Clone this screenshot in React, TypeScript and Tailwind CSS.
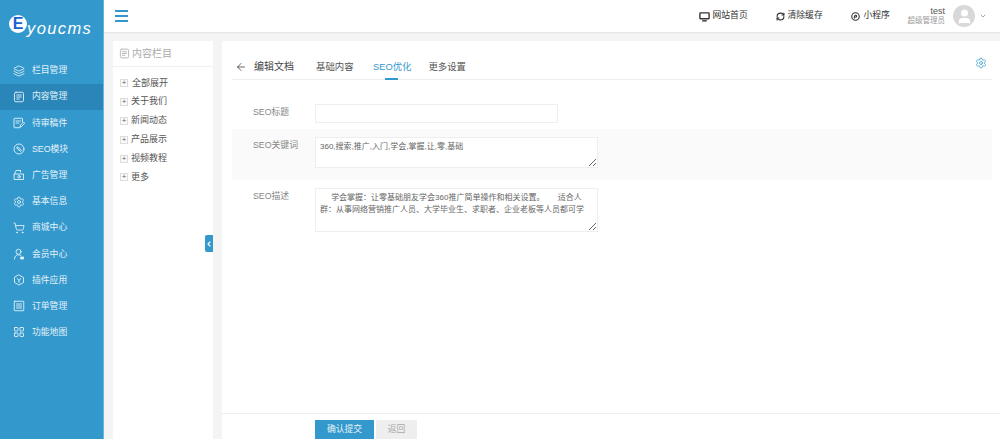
import type { ReactNode } from "react";
import { ArrowLeft, ChevronDown, ChevronLeft, Layers, LayoutGrid, RefreshCw, Settings, ShoppingCart, User } from "lucide-react";

function Svg({ size = 12, children }: { size?: number; children: ReactNode }) {
  return (
    <svg width={size} height={size} viewBox="0 0 24 24" fill="none" stroke="currentColor" strokeWidth="1.8" strokeLinecap="round" strokeLinejoin="round">
      {children}
    </svg>
  );
}

function DocIcon({ size = 12 }: { size?: number }) {
  return (
    <Svg size={size}>
      <rect x="3" y="2.5" width="18" height="19" rx="3" />
      <path d="M7.5 8h9M7.5 12h9M7.5 16h5" />
    </Svg>
  );
}

function ReviewIcon() {
  return (
    <Svg>
      <path d="M19 10V4a1.5 1.5 0 0 0-1.5-1.5h-14A1.5 1.5 0 0 0 2 4v16a1.5 1.5 0 0 0 1.5 1.5H13" />
      <path d="M6 8h9M6 12h6M14 20l1-4 6-6 2.5 2.5-6 6z" />
    </Svg>
  );
}

function SeoIcon() {
  return (
    <Svg>
      <circle cx="12" cy="12" r="10" />
      <path d="M8 9.5l2-2 7 7-1.6 2.3L8 9.5zM9.5 12l3 3" />
    </Svg>
  );
}

function AdIcon() {
  return (
    <Svg>
      <path d="M3 10h18v11H3zM3 10l3-7h9M15 3v3" />
      <circle cx="12" cy="15.5" r="2.5" />
    </Svg>
  );
}

function MemberIcon() {
  return (
    <Svg>
      <circle cx="11" cy="7.5" r="5" />
      <path d="M3 22c0-5 3-8.5 8-8.5 2 0 3.5.5 5 1.5" />
      <rect x="16" y="18" width="5" height="4" fill="currentColor" />
    </Svg>
  );
}

function PluginIcon() {
  return (
    <Svg>
      <path d="M12 2l9 5v10l-9 5-9-5V7z" />
      <path d="M8 9l4 3.5L16 9M12 12.5V17" />
    </Svg>
  );
}

function OrderIcon() {
  return (
    <Svg>
      <rect x="2.5" y="2.5" width="19" height="19" rx="1" />
      <path d="M7 8h10M7 12h10M7 16h10" />
    </Svg>
  );
}

function MonitorIcon() {
  return (
    <svg width="11" height="11" viewBox="0 0 24 24" fill="none" stroke="currentColor" strokeWidth="3">
      <rect x="2" y="4" width="20" height="13" rx="1" />
      <path d="M7 21.5h10" />
    </svg>
  );
}

function MiniIcon() {
  return (
    <svg width="9" height="9" viewBox="0 0 24 24" fill="none" stroke="currentColor" strokeWidth="3" strokeLinecap="round">
      <circle cx="12" cy="12" r="10" />
      <path d="M8.5 16l1.5-5.5a2.6 2.6 0 1 1 2.5 3.3" />
    </svg>
  );
}

const menu = [
  { label: "栏目管理", icon: <Layers size={12} strokeWidth={1.7} /> },
  { label: "内容管理", icon: <DocIcon />, active: true },
  { label: "待审稿件", icon: <ReviewIcon /> },
  { label: "SEO模块", icon: <SeoIcon /> },
  { label: "广告管理", icon: <AdIcon /> },
  { label: "基本信息", icon: <Settings size={12} strokeWidth={1.7} /> },
  { label: "商城中心", icon: <ShoppingCart size={12} strokeWidth={1.7} /> },
  { label: "会员中心", icon: <MemberIcon /> },
  { label: "插件应用", icon: <PluginIcon /> },
  { label: "订单管理", icon: <OrderIcon /> },
  { label: "功能地图", icon: <LayoutGrid size={12} strokeWidth={1.8} /> },
];

const tree = ["全部展开", "关于我们", "新闻动态", "产品展示", "视频教程", "更多"];

function Sidebar() {
  return (
    <aside className="w-[104px] shrink-0 bg-[#3398cc] border-r border-[#6db5dc] text-[#e4f2f9]">
      <div className="h-[57.5px] pl-[9px] pt-[15px] flex items-start">
        <div className="w-[18px] h-[18px] rounded-full bg-white flex items-center justify-center text-[#1a5fd0] text-[16px] font-bold leading-none">
          E
        </div>
        <span className="text-white text-[16.5px] italic leading-[26px] tracking-[1.4px]">youcms</span>
      </div>
      <nav>
        {menu.map((item) => (
          <div
            key={item.label}
            className={
              item.active
                ? "h-[26.2px] flex items-center pl-[13px] gap-[7px] bg-[#2a86b8]"
                : "h-[26.2px] flex items-center pl-[13px] gap-[7px]"
            }
          >
            {item.icon}
            <span className="text-[8.8px] leading-none">{item.label}</span>
          </div>
        ))}
      </nav>
    </aside>
  );
}

function Header() {
  return (
    <header className="h-[32px] shrink-0 bg-white shadow-[0_1px_2px_rgba(0,0,0,0.08)] flex items-center pl-[11px] pr-[13px] text-[#444] text-[8.8px] relative">
      <div className="flex flex-col gap-[3px]">
        <span className="block w-[13px] h-[2px] bg-[#3398cc]"></span>
        <span className="block w-[13px] h-[2px] bg-[#3398cc]"></span>
        <span className="block w-[13px] h-[2px] bg-[#3398cc]"></span>
      </div>
      <div className="ml-auto flex items-center">
        <span className="flex items-center gap-[3px] w-[77px] text-[#333]">
          <MonitorIcon />
          网站首页
        </span>
        <span className="flex items-center gap-[3px] w-[75px] text-[#333]">
          <RefreshCw size={9} strokeWidth={3} />
          清除缓存
        </span>
        <span className="flex items-center gap-[4px] w-[57px] text-[#333]">
          <MiniIcon />
          小程序
        </span>
        <div className="text-right leading-[10px] mr-[8px]">
          <div className="text-[#555] text-[9px]">test</div>
          <div className="text-[#999] text-[7.5px]">超级管理员</div>
        </div>
        <div className="w-[22px] h-[22px] rounded-full bg-[#d8d8d8] flex items-center justify-center">
          <User size={17} fill="#fff" className="text-white" />
        </div>
        <ChevronDown size={8} className="text-[#777] ml-[4px]" />
      </div>
    </header>
  );
}

function TreePanel() {
  return (
    <div className="w-[100px] shrink-0 bg-white relative">
      <div className="h-[26px] border-b border-[#f0f0f0] flex items-center pl-[6px] gap-[2px] text-[#aaa] text-[10px]">
        <DocIcon size={11} />
        内容栏目
      </div>
      <ul className="pt-[7px]">
        {tree.map((name, i) => (
          <li key={name} className="h-[18.8px] flex items-center pl-[7px] text-[#555] text-[9px]">
            <span className="w-[8px] h-[8px] border border-[#ddd] bg-[#fafafa] text-[#666] text-[8px] leading-[6px] text-center mr-[3px]">
              +
            </span>
            <span className={i === 0 ? "ml-[1px]" : ""}>{name}</span>
          </li>
        ))}
      </ul>
      <button className="absolute right-0 top-[194px] w-[8px] h-[17px] bg-[#3398cc] rounded-l-[2px] flex items-center justify-center text-white">
        <ChevronLeft size={8} strokeWidth={3.5} />
      </button>
    </div>
  );
}

function Field({ label, className, children }: { label: string; className: string; children: ReactNode }) {
  return (
    <div className={"flex " + className}>
      <label className="w-[83px] shrink-0 pl-[21px] pt-[2px] text-[#888] text-[8.8px] leading-[12px]">{label}</label>
      {children}
    </div>
  );
}

const areaClass =
  "block w-[283px] border border-[#eee] bg-white px-[4px] py-[3px] text-[#666] text-[8px] leading-[11.5px] outline-none";

function MainPanel() {
  return (
    <div className="flex-1 min-w-0 bg-white flex flex-col">
      <div className="h-[39px] shrink-0 ml-[10px] mr-[8px] border-b border-[#eee] flex items-center pt-[13px] text-[9.4px] leading-[14px] text-[#555] relative">
        <ArrowLeft size={12} strokeWidth={1.5} className="ml-[3px] text-[#333]" />
        <span className="ml-[7px] mr-[22px] text-[10px] text-[#444]">编辑文档</span>
        <span className="mr-[19.4px]">基础内容</span>
        <span className="mr-[17px] text-[#3398cc] relative">
          SEO优化
          <span className="absolute left-[12px] w-[13px] bottom-[-6px] h-[1.5px] bg-[#3398cc]"></span>
        </span>
        <span>更多设置</span>
        <Settings size={12} strokeWidth={1.5} className="absolute right-[5px] top-[15.5px] text-[#3398cc]" />
      </div>
      <div className="flex-1 ml-[10px] mr-[8px]">
        <Field label="SEO标题" className="pt-[24px] pb-[6px]">
          <input className="w-[243px] h-[19px] border border-[#eee] bg-white outline-none" />
        </Field>
        <Field label="SEO关键词" className="pt-[8px] pb-[12px] bg-[#fafafa]">
          <textarea readOnly className={areaClass + " h-[31px]"} value="360,搜索,推广,入门,学会,掌握,让,零,基础" />
        </Field>
        <Field label="SEO描述" className="pt-[8px]">
          <textarea
            readOnly
            className={areaClass + " h-[44px]"}
            value="     学会掌握：让零基础朋友学会360推广简单操作和相关设置。      适合人群：从事网络营销推广人员、大学毕业生、求职者、企业老板等人员都可学"
          />
        </Field>
      </div>
      <div className="h-[26px] shrink-0 border-t border-[#eee] pl-[93px] pt-[6px] flex gap-[2px] text-[8.8px]">
        <button className="w-[59px] h-[19px] bg-[#3398cc] text-[#e8f4fa]">确认提交</button>
        <button className="w-[41px] h-[19px] bg-[#eeeeee] text-[#aaa]">返回</button>
      </div>
    </div>
  );
}

export default function App() {
  return (
    <div className="w-[1000px] h-[439px] overflow-hidden flex bg-[#f4f4f4] font-['Liberation_Sans','Noto_Sans_CJK_SC',sans-serif]">
      <Sidebar />
      <div className="flex-1 min-w-0 flex flex-col">
        <Header />
        <div className="flex-1 min-h-0 flex gap-[9px] pl-[9px] pt-[9px]">
          <TreePanel />
          <MainPanel />
        </div>
      </div>
    </div>
  );
}
